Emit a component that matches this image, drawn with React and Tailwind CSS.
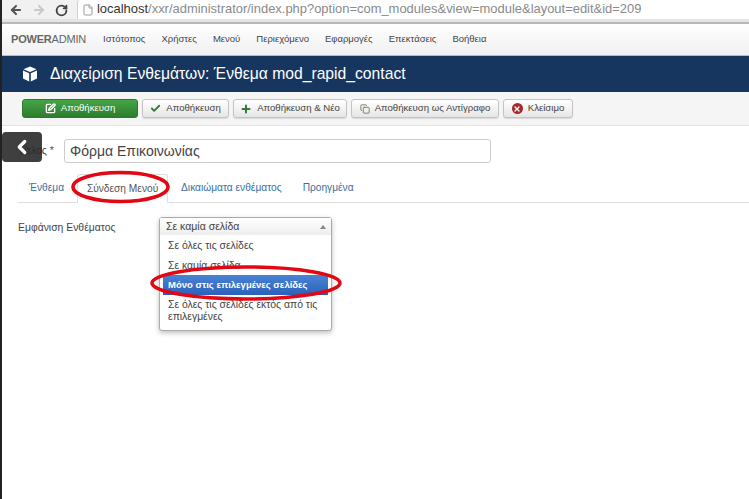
import { ArrowLeft, ArrowRight, RotateCw, File, Check, Plus, Copy, ChevronLeft, SquarePen, X } from "lucide-react";

const navItems = ["Ιστότοπος", "Χρήστες", "Μενού", "Περιεχόμενο", "Εφαρμογές", "Επεκτάσεις", "Βοήθεια"];

function ToolButton({ icon, label, className }) {
  return (
    <button className={`h-[19px] flex items-center justify-center gap-[5px] rounded-[3px] border border-[#c4c4c4] bg-gradient-to-b from-white to-[#e6e6e6] text-[9.6px] text-[#444] shadow-[0_1px_1px_rgba(0,0,0,0.12)] ${className}`}>
      {icon}
      <span>{label}</span>
    </button>
  );
}

function CubeIcon() {
  return (
    <svg width="16" height="16" viewBox="0 0 16 16" fill="white" className="ml-[20px]">
      <polygon points="8,0.5 14.5,3.2 8,6 1.5,3.2" />
      <polygon points="1,4.6 7.2,7.3 7.2,15.5 1,12.6" />
      <polygon points="15,4.6 8.8,7.3 8.8,15.5 15,12.6" />
    </svg>
  );
}

export default function App() {
  return (
    <div className="relative w-[749px] h-[499px] overflow-hidden bg-white border-l-2 border-[#222] font-['Liberation_Sans',Arial,sans-serif]">
      {/* browser chrome */}
      <div className="h-[24px] bg-[#e4e4e4] border-b-2 border-[#b8b8b8]">
        <div className="h-[19px] bg-[#f1f1f1] flex items-start">
          <div className="flex items-center gap-[9px] pl-[7px] pt-[1px] w-[75px] h-[19px]">
            <ArrowLeft size={14} strokeWidth={3.5} className="text-[#555]" />
            <ArrowRight size={14} strokeWidth={3.5} className="text-[#c9c9c9]" />
            <RotateCw size={13} strokeWidth={3.5} className="text-[#444]" />
          </div>
          <div className="flex-1 h-[19px] bg-white border-l border-[#d0d0d0] rounded-tl-[3px] flex items-center pl-[4px] gap-[3px] text-[12.95px] leading-none">
            <File size={12} className="text-[#999]" />
            <span className="text-[#333]">localhost<span className="text-[#8a8a8a]">/xxr/administrator/index.php?option=com_modules&amp;view=module&amp;layout=edit&amp;id=209</span></span>
          </div>
        </div>
      </div>

      {/* top nav */}
      <div className="h-[32px] bg-gradient-to-b from-white to-[#f0f0f0] border-b border-[#bbb] flex items-center">
        <div className="w-[101px] pl-[9px] text-[11px] tracking-[-0.2px] text-[#666]">
          <span className="font-bold">POWER</span>ADMIN
        </div>
        <div className="flex gap-[16px] text-[9.5px] text-[#444]">
          {navItems.map((item) => (
            <span key={item}>{item}</span>
          ))}
        </div>
      </div>

      {/* title bar */}
      <div className="h-[36px] bg-[#17365f] flex items-center text-white">
        <CubeIcon />
        <h1 className="ml-[12px] text-[15.7px] leading-none">Διαχείριση Ενθεμάτων: Ένθεμα mod_rapid_contact</h1>
      </div>

      {/* toolbar */}
      <div className="h-[34px] bg-[#f5f5f5] border-b border-[#e3e3e3] flex items-center pl-[20px] gap-[4px]">
        <button className="w-[116px] h-[19px] flex items-center justify-center gap-[5px] rounded-[3px] border border-[#2a7a2a] bg-gradient-to-b from-[#46a546] to-[#2d7d2d] text-[9.6px] text-white">
          <SquarePen size={11} strokeWidth={3} />
          <span>Αποθήκευση</span>
        </button>
        <ToolButton className="w-[87px]" label="Αποθήκευση" icon={<Check size={11} strokeWidth={4} className="text-[#2f7d32]" />} />
        <ToolButton className="w-[114px]" label="Αποθήκευση & Νέο" icon={<Plus size={12} strokeWidth={4} className="text-[#2f7d32]" />} />
        <ToolButton className="w-[148px]" label="Αποθήκευση ως Αντίγραφο" icon={<Copy size={10} strokeWidth={2} className="text-[#5b7a3a]" />} />
        <ToolButton
          className="w-[70px]"
          label="Κλείσιμο"
          icon={
            <span className="w-[11px] h-[11px] rounded-full bg-[#a4282c] flex items-center justify-center">
              <X size={8} strokeWidth={4} className="text-white" />
            </span>
          }
        />
      </div>

      {/* title field */}
      <div className="flex items-center h-[24px] mt-[13px] pl-[16px]">
        <label className="w-[46px] text-[10.5px] text-[#333]">Τίτλος <span className="text-[#555]">*</span></label>
        <div className="w-[427px] h-[24px] border border-[#ccc] rounded-[3px] pl-[5px] pt-[1px] flex items-center text-[14px] text-[#444]">
          Φόρμα Επικοινωνίας
        </div>
      </div>

      {/* tabs */}
      <div className="flex items-end h-[29px] mt-[11px] ml-[16px] border-b border-[#ddd] text-[10.2px] text-[#3d6f9e]">
        <span className="pl-[11px] pr-[13px] pb-[7px]">Ένθεμα</span>
        <span className="w-[91px] h-[29px] -mb-px bg-white border border-b-white border-[#ddd] rounded-t-[3px] flex items-center justify-center text-[#555]">Σύνδεση Μενού</span>
        <span className="pl-[13px] pr-[21px] pb-[7px]">Δικαιώματα ενθέματος</span>
        <span className="pb-[7px]">Προηγμένα</span>
      </div>

      {/* module assignment */}
      <div className="flex items-start mt-[14px] pl-[16px] text-[10.4px] text-[#444]">
        <span className="w-[141px] pt-[3px]">Εμφάνιση Ενθέματος</span>
        <div className="w-[173px] h-[114px] bg-white border border-[#aaa] rounded-[3px] shadow-[0_2px_5px_rgba(0,0,0,0.25)]">
          <div className="h-[17px] pl-[6px] pr-[5px] flex items-center justify-between bg-gradient-to-b from-white to-[#eee] text-[10.5px]">
            <span>Σε καμία σελίδα</span>
            <span className="w-0 h-0 border-x-[3px] border-x-transparent border-b-[4px] border-b-[#888]" />
          </div>
          <div className="px-[3px]">
            <div className="h-[20px] pl-[5px] pt-[1px] flex items-center">Σε όλες τις σελίδες</div>
            <div className="h-[20px] pl-[5px] pt-[1px] flex items-center">Σε καμία σελίδα</div>
            <div className="h-[20px] pl-[5px] flex items-center bg-gradient-to-b from-[#4a82d4] to-[#2a62bb] font-bold text-[9.5px] text-white">Μόνο στις επιλεγμένες σελίδες</div>
            <div className="pl-[5px] pt-[4px] leading-[12px]">Σε όλες τις σελίδες εκτός από τις επιλεγμένες</div>
          </div>
        </div>
      </div>

      {/* side toggle */}
      <button className="absolute left-0 top-[132px] w-[40px] h-[30px] bg-[#2a2a2a]/90 rounded-[4px] flex items-center justify-center text-white">
        <ChevronLeft size={22} strokeWidth={3.5} />
      </button>

      {/* red annotation circles */}
      <svg className="absolute -left-[2px] top-0 pointer-events-none" width="749" height="499" fill="none" stroke="#e30613" strokeWidth="3.5">
        <ellipse cx="120.5" cy="187" rx="47.5" ry="14.5" />
        <ellipse cx="246" cy="283" rx="94" ry="16" />
      </svg>
    </div>
  );
}
